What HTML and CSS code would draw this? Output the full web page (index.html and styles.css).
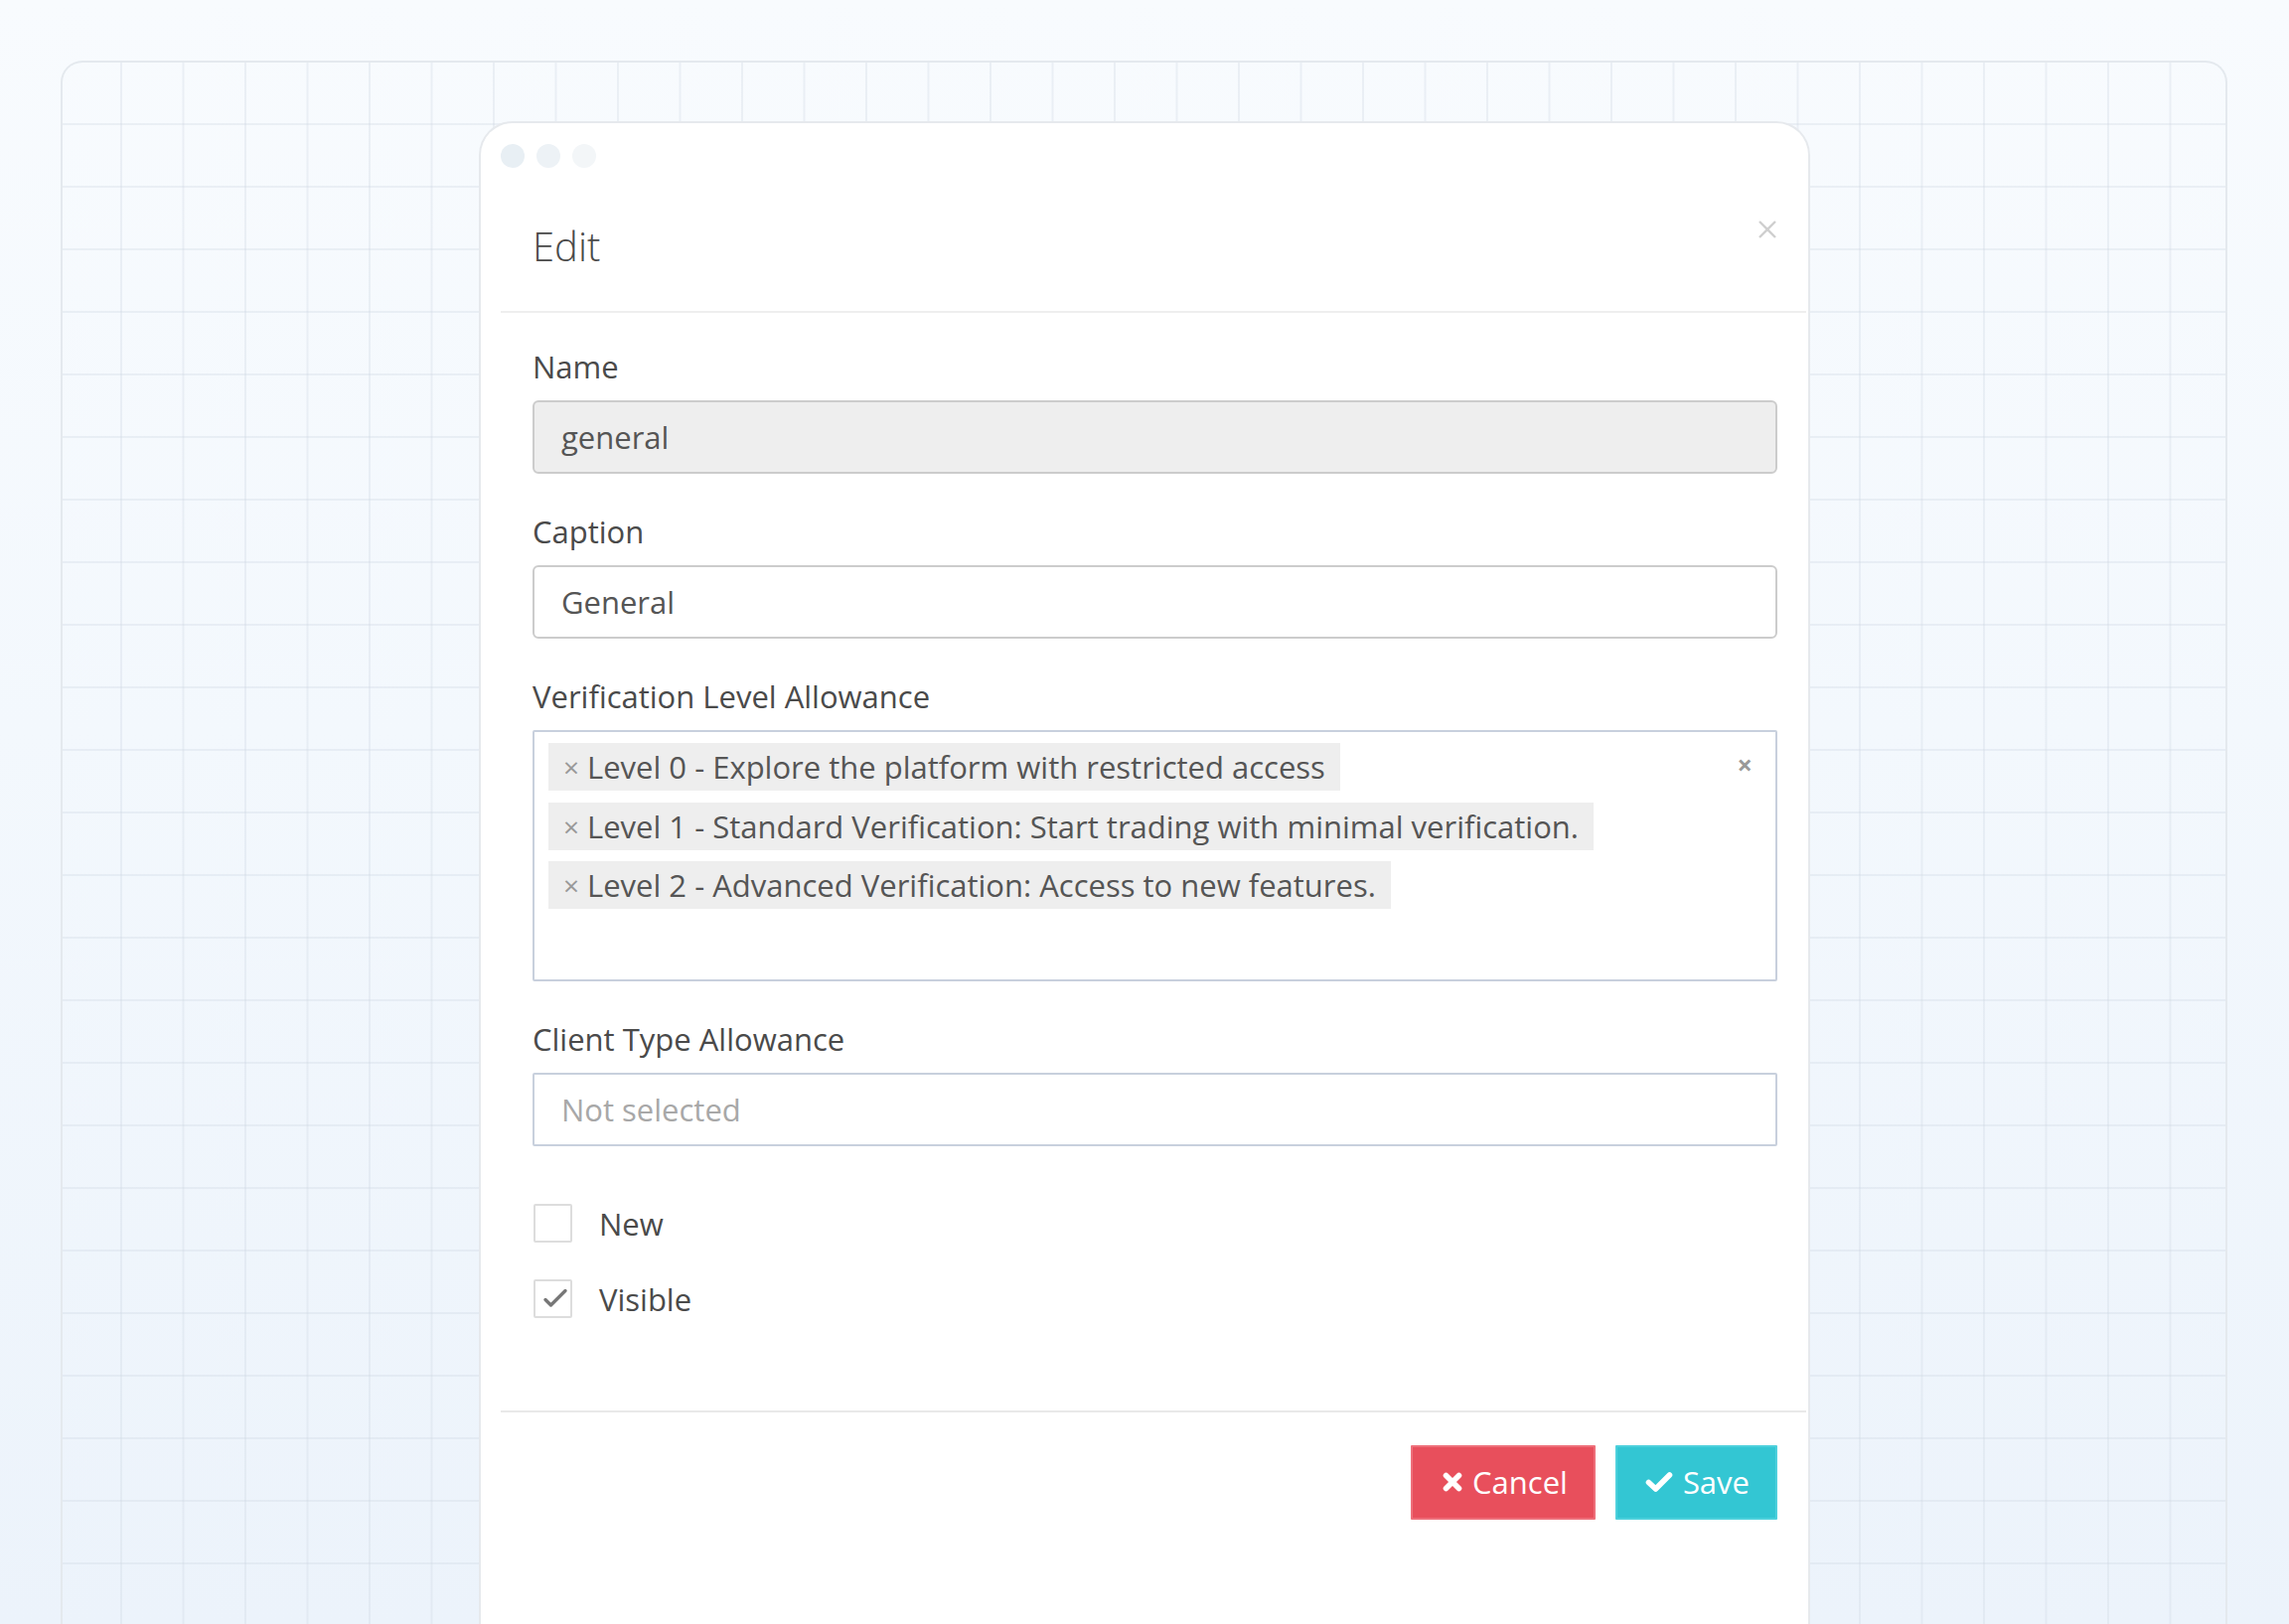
FILE: index.html
```html
<!DOCTYPE html>
<html lang="en">
<head>
<meta charset="utf-8">
<title>Edit</title>
<link rel="stylesheet" href="styles.css">
</head>
<body>
<div class="stage">
  <div class="panel">
    <div class="modal">
      <div class="dots">
        <span class="dot dot-1"></span>
        <span class="dot dot-2"></span>
        <span class="dot dot-3"></span>
      </div>
      <div class="modal-header">
        <h4 class="modal-title">Edit</h4>
        <span class="close" aria-label="Close">
          <svg width="22" height="22" viewBox="0 0 22 22"><path d="M3 3 L19 19 M19 3 L3 19" stroke="#cfcfcf" stroke-width="2.4" fill="none"/></svg>
        </span>
      </div>
      <div class="modal-body">
        <div class="form-group">
          <label class="form-label">Name</label>
          <div class="form-control readonly">general</div>
        </div>
        <div class="form-group">
          <label class="form-label">Caption</label>
          <div class="form-control">General</div>
        </div>
        <div class="form-group">
          <label class="form-label">Verification Level Allowance</label>
          <div class="multi-select">
            <div class="choices">
              <span class="choice"><span class="choice-remove">×</span>Level 0 - Explore the platform with restricted access</span>
              <span class="choice"><span class="choice-remove">×</span>Level 1 - Standard Verification: Start trading with minimal verification.</span>
              <span class="choice"><span class="choice-remove">×</span>Level 2 - Advanced Verification: Access to new features.</span>
              <span class="search-field"></span>
            </div>
            <span class="clear-all">×</span>
          </div>
        </div>
        <div class="form-group">
          <label class="form-label">Client Type Allowance</label>
          <div class="form-control select placeholder">Not selected</div>
        </div>
        <div class="check-list">
          <div class="check-row">
            <span class="checkbox"></span>
            <span class="check-label">New</span>
          </div>
          <div class="check-row">
            <span class="checkbox checked">
              <svg width="34" height="34" viewBox="0 0 34 34"><path d="M9 17.5 L14.5 23 L29 8.5" stroke="#777" stroke-width="3.4" fill="none" stroke-linecap="round" stroke-linejoin="round"/></svg>
            </span>
            <span class="check-label">Visible</span>
          </div>
        </div>
      </div>
      <div class="modal-footer">
        <button class="btn btn-cancel">
          <svg width="22" height="22" viewBox="0 0 22 22"><path d="M4.5 4.5 L17.5 17.5 M17.5 4.5 L4.5 17.5" stroke="#fff" stroke-width="5.6" fill="none" stroke-linecap="round"/></svg>
          <span>Cancel</span>
        </button>
        <button class="btn btn-save">
          <svg width="28" height="22" viewBox="0 0 28 22"><path d="M3.5 11.5 L10.5 18 L24.5 4" stroke="#fff" stroke-width="5.6" fill="none" stroke-linecap="round" stroke-linejoin="round"/></svg>
          <span>Save</span>
        </button>
      </div>
    </div>
  </div>
</div>
</body>
</html>
```
FILE: styles.css
```css
* { box-sizing: border-box; }

html, body {
  margin: 0;
  padding: 0;
  height: 1635px;
  overflow: hidden;
}

body {
  font-family: "Open Sans", "Noto Sans", "Liberation Sans", sans-serif;
  background: linear-gradient(180deg, #f8fbfe 0%, #f3f8fd 45%, #ecf3fb 100%);
  color: #555;
}

.stage {
  height: 1635px;
  padding: 61px 62px 0 61px;
  overflow: hidden;
}

.panel {
  height: 1700px;
  border: 2px solid #e4e9ee;
  border-bottom: 0;
  border-radius: 22px 22px 0 0;
  padding-top: 59px;
  background-image:
    linear-gradient(to right, rgba(205, 214, 226, 0.32) 2px, transparent 2px),
    linear-gradient(to bottom, rgba(205, 214, 226, 0.32) 2px, transparent 2px);
  background-size: 62.5px 63px;
  background-position: 58px 61px;
}

.modal {
  margin-left: 419px;
  width: 1340px;
  height: 1600px;
  background: #fff;
  border: 2px solid #e6e9ed;
  border-bottom: 0;
  border-radius: 34px 34px 0 0;
}

.dots {
  display: flex;
  gap: 12px;
  padding: 21px 0 0 20px;
}

.dot {
  width: 24px;
  height: 24px;
  border-radius: 50%;
}
.dot-1 { background: #e8eff4; }
.dot-2 { background: #edf2f6; }
.dot-3 { background: #f3f6f8; }

.modal-header {
  display: flex;
  justify-content: space-between;
  align-items: flex-start;
  margin: 53px 2px 0 20px;
  padding: 0 28px 43px 32px;
  border-bottom: 2px solid #eeeeee;
}

.modal-title {
  margin: 4px 0 0;
  font-size: 40px;
  line-height: 44px;
  font-weight: 300;
  color: #4a4a4a;
}

.close {
  display: block;
  width: 22px;
  height: 22px;
  margin-top: -2px;
}
.close svg { display: block; }

.modal-body {
  padding: 34px 31px 93px 52px;
}

.form-group {
  margin-bottom: 38px;
}

.form-label {
  display: block;
  font-size: 31px;
  line-height: 40px;
  margin-bottom: 14px;
  color: #4a4a4a;
}

.form-control {
  height: 74px;
  border: 2px solid #cccccc;
  border-radius: 6px;
  padding: 0 27px;
  font-size: 31px;
  line-height: 70px;
  color: #555;
  background: #fff;
}

.form-control.readonly {
  background: #eeeeee;
}

.form-control.select {
  border-color: #c8d0dd;
  border-radius: 2px;
}

.form-control.placeholder {
  color: #a8a8a8;
}

.multi-select {
  display: flex;
  align-items: flex-start;
  border: 2px solid #c8d0dd;
  border-radius: 2px;
  padding: 11px 0 11px 14px;
}

.choices {
  flex: 1;
  display: flex;
  flex-wrap: wrap;
  row-gap: 11.5px;
  align-items: flex-start;
}

.choice {
  display: inline-flex;
  align-items: center;
  height: 48px;
  padding: 0 15px 0 15px;
  background: #eeeeee;
  font-size: 31px;
  line-height: 48px;
  color: #555;
  white-space: nowrap;
}

.choice-remove {
  font-size: 28px;
  color: #999;
  margin-right: 8px;
}

.search-field {
  display: block;
  width: 100%;
  height: 48px;
}

.clear-all {
  font-size: 27px;
  line-height: 24px;
  font-weight: 700;
  color: #999;
  margin: 10px 23px 0 12px;
}

.check-list {
  display: flex;
  flex-direction: column;
  gap: 38px;
  padding-top: 21px;
}

.check-row {
  display: flex;
  align-items: center;
  height: 38px;
}

.checkbox {
  display: flex;
  align-items: center;
  justify-content: center;
  width: 39px;
  height: 39px;
  margin-left: 1px;
  border: 2px solid #dddddd;
  border-radius: 2px;
  background: #fff;
}
.checkbox svg { display: block; }

.check-label {
  margin-left: 27px;
  font-size: 31px;
  line-height: 40px;
  color: #4a4a4a;
}

.modal-footer {
  display: flex;
  justify-content: flex-end;
  gap: 20px;
  margin: 0 2px 0 20px;
  padding: 33px 29px 0 0;
  border-top: 2px solid #e9e9e9;
}

.btn {
  display: inline-flex;
  align-items: center;
  height: 75px;
  border: 2px solid transparent;
  border-radius: 1px;
  font-family: "Open Sans", "Noto Sans", "Liberation Sans", sans-serif;
  font-size: 31px;
  color: #fff;
  cursor: pointer;
}
.btn svg { display: block; }

.btn-cancel {
  background: #e84f5c;
  border-color: #ee6f7a;
  padding: 0 26px 0 29px;
  gap: 9px;
}

.btn-save {
  background: #33c6d3;
  border-color: #4dd0dc;
  padding: 0 26px 0 28px;
  gap: 10px;
}
```
